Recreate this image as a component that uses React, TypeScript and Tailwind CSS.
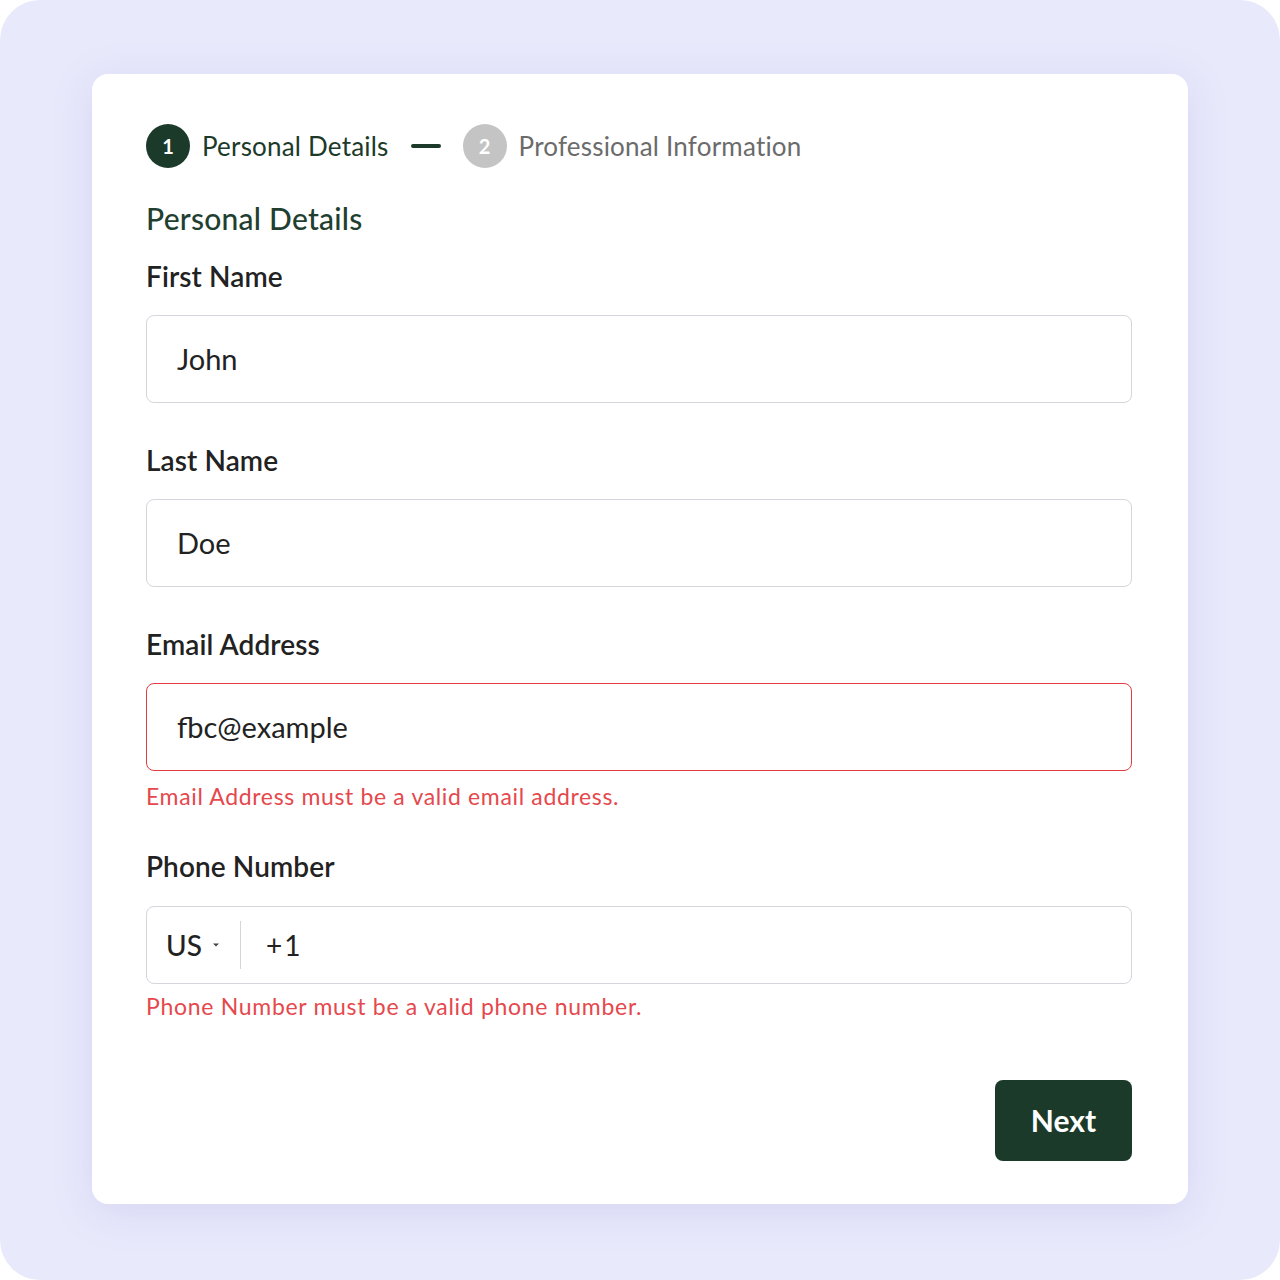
import { useState } from "react";

const font = { fontFamily: 'Lato, "Noto Sans", Arial, sans-serif' };

function Field({
  label,
  value,
  error,
  labelClass,
}: {
  label: string;
  value: string;
  error?: string;
  labelClass: string;
}) {
  return (
    <div className={labelClass}>
      <label className="block h-8 text-[28px] leading-8 font-semibold text-[#222222] tracking-[0.1px]">
        {label}
      </label>
      <div
        className={
          "mt-[23px] h-[88px] rounded-lg border flex items-center px-[30px] " +
          (error ? "border-[#e23b40] border-[1.5px]" : "border-[#d4d6dc]")
        }
      >
        <span className="text-[29px] text-[#222222]">{value}</span>
      </div>
      {error && (
        <p className="mt-[11px] h-7 text-[23px] leading-7 text-[#e5484d] tracking-[0.65px]">{error}</p>
      )}
    </div>
  );
}

export default function App() {
  const [step] = useState(1);

  return (
    <div className="w-[1280px] h-[1280px] bg-white" style={font}>
      <div className="w-full h-full rounded-[40px] bg-[#e9e9fc] flex items-start justify-center pt-[74px]">
        <div className="w-[1096px] h-[1130px] bg-white rounded-2xl shadow-[0_8px_40px_rgba(120,120,200,0.18)] pt-[50px] pl-[54px] pr-[56px]">
          {/* Stepper */}
          <div className="flex items-center h-11">
            <div className="w-11 h-11 rounded-full bg-[#1c3a2a] text-white flex items-center justify-center text-[20px] font-bold">
              {step}
            </div>
            <span className="ml-3 text-[26px] text-[#1c3a2a] tracking-[0.2px]">Personal Details</span>
            <div className="ml-[22px] w-[30px] h-1 bg-[#1c3a2a] rounded-sm" />
            <div className="ml-[22px] w-11 h-11 rounded-full bg-[#c4c4c4] text-white flex items-center justify-center text-[20px] font-bold">
              2
            </div>
            <span className="ml-3 text-[26px] text-[#6b6b6b] tracking-[0.2px]">Professional Information</span>
          </div>

          {/* Heading */}
          <h2 className="mt-8 h-9 text-[30px] leading-9 font-medium text-[#1f4030] tracking-[0.25px]">
            Personal Details
          </h2>

          <Field labelClass="mt-6" label="First Name" value="John" />
          <Field labelClass="mt-[41px]" label="Last Name" value="Doe" />
          <Field
            labelClass="mt-[41px]"
            label="Email Address"
            value="fbc@example"
            error="Email Address must be a valid email address."
          />

          {/* Phone */}
          <div className="mt-10">
            <label className="block h-8 text-[28px] leading-8 font-semibold text-[#222222] tracking-[0.1px]">
              Phone Number
            </label>
            <div className="mt-6 h-[78px] rounded-lg border border-[#d4d6dc] flex items-center">
              <div className="flex items-center pl-[19px] h-full">
                <span className="text-[28px] text-[#222222] font-medium">US</span>
                <svg className="ml-[10px]" width="8" height="6" viewBox="0 0 8 6">
                  <path d="M1 1.5 L4 4.5 L7 1.5 Z" fill="#444" />
                </svg>
              </div>
              <div className="ml-5 w-px h-12 bg-[#d4d6dc]" />
              <span className="ml-[25px] text-[28px] text-[#222222] tracking-[2px]">+1</span>
            </div>
            <p className="mt-2 h-7 text-[23px] leading-7 text-[#e5484d] tracking-[0.7px]">
              Phone Number must be a valid phone number.
            </p>
          </div>

          {/* Actions */}
          <div className="mt-[60px] flex justify-end">
            <button className="w-[137px] h-[81px] rounded-lg bg-[#1c3a2a] text-white text-[30px] font-bold">
              Next
            </button>
          </div>
        </div>
      </div>
    </div>
  );
}
